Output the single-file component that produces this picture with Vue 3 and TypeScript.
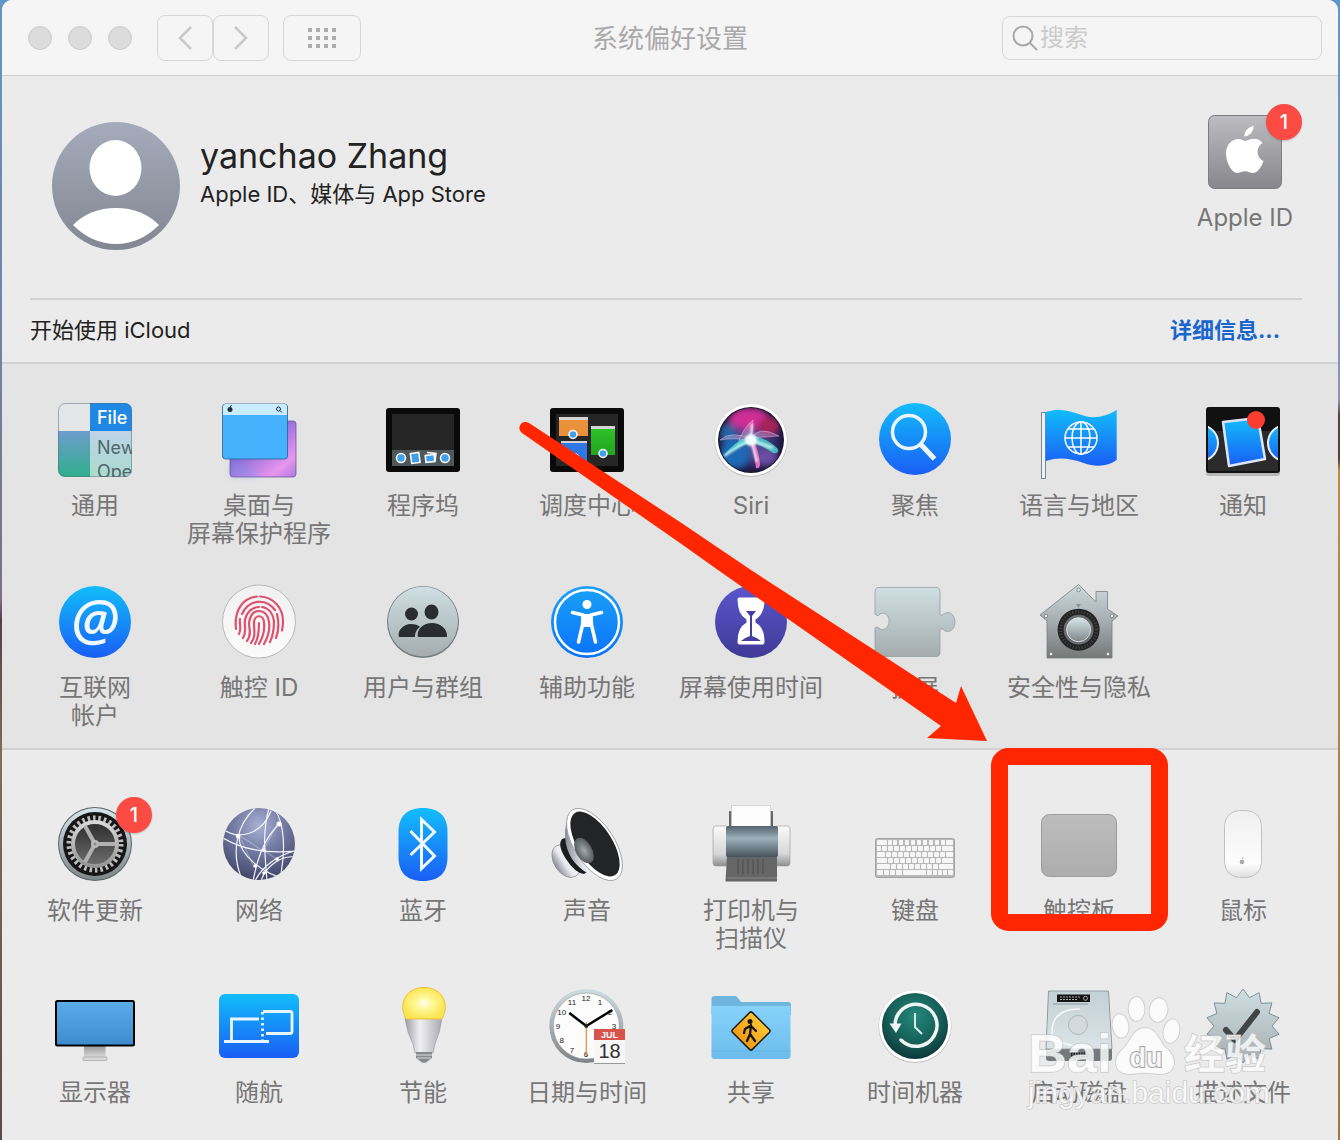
<script setup lang="ts">
interface Pane {
  id: string
  lines: string[]
  badge?: number
}

const personal: Pane[] = [
  { id: 'general', lines: ['通用'] },
  { id: 'desktop', lines: ['桌面与', '屏幕保护程序'] },
  { id: 'dock', lines: ['程序坞'] },
  { id: 'mission', lines: ['调度中心'] },
  { id: 'siri', lines: ['Siri'] },
  { id: 'spotlight', lines: ['聚焦'] },
  { id: 'language', lines: ['语言与地区'] },
  { id: 'notifications', lines: ['通知'] },
  { id: 'internet', lines: ['互联网', '帐户'] },
  { id: 'touchid', lines: ['触控 ID'] },
  { id: 'users', lines: ['用户与群组'] },
  { id: 'accessibility', lines: ['辅助功能'] },
  { id: 'screentime', lines: ['屏幕使用时间'] },
  { id: 'extensions', lines: ['扩展'] },
  { id: 'security', lines: ['安全性与隐私'] },
]

const hardware: Pane[] = [
  { id: 'update', lines: ['软件更新'], badge: 1 },
  { id: 'network', lines: ['网络'] },
  { id: 'bluetooth', lines: ['蓝牙'] },
  { id: 'sound', lines: ['声音'] },
  { id: 'printer', lines: ['打印机与', '扫描仪'] },
  { id: 'keyboard', lines: ['键盘'] },
  { id: 'trackpad', lines: ['触控板'] },
  { id: 'mouse', lines: ['鼠标'] },
  { id: 'display', lines: ['显示器'] },
  { id: 'sidecar', lines: ['随航'] },
  { id: 'energy', lines: ['节能'] },
  { id: 'datetime', lines: ['日期与时间'] },
  { id: 'sharing', lines: ['共享'] },
  { id: 'timemachine', lines: ['时间机器'] },
  { id: 'startup', lines: ['启动磁盘'] },
  { id: 'profiles', lines: ['描述文件'] },
]

const sections = [
  { name: 'personal', panes: personal },
  { name: 'hardware', panes: hardware },
]

// The calendar sheet covers 4 and 5 on the clock face.
const hours = [1, 2, 3, 6, 7, 8, 9, 10, 11, 12].map((n) => {
  const angle = (n * Math.PI) / 6
  return { n, x: 39 + 28 * Math.sin(angle), y: 42 - 28 * Math.cos(angle) }
})

const starPoints = Array.from({ length: 28 }, (_, i) => {
  const r = i % 2 === 0 ? 37 : 29
  const angle = (i * Math.PI) / 14
  return `${(40 + r * Math.sin(angle)).toFixed(1)},${(39 - r * Math.cos(angle)).toFixed(1)}`
}).join(' ')

const keyRows = [
  { y: 35, keys: [[2, 10], [13, 4], [18, 4], [24, 4], [30, 4], [36, 4], [42, 4], [48, 4], [54, 4], [60, 4], [66, 4], [71, 7]] },
  { y: 41, keys: [[2, 4], [7, 5], [13, 5], [19, 5], [25, 5], [31, 5], [37, 5], [43, 5], [49, 5], [55, 5], [61, 5], [67, 11]] },
  { y: 47, keys: [[2, 8], [11, 5], [17, 5], [23, 5], [29, 5], [35, 5], [41, 5], [47, 5], [53, 5], [59, 5], [65, 5], [71, 7]] },
  { y: 53, keys: [[2, 10], [13, 5], [19, 5], [25, 5], [31, 5], [37, 5], [43, 5], [49, 5], [55, 5], [61, 5], [67, 11]] },
  { y: 59, keys: [[2, 13], [16, 5], [22, 5], [28, 5], [34, 5], [40, 5], [46, 5], [52, 5], [58, 5], [64, 14]] },
  { y: 65, keys: [[2, 6], [9, 5], [15, 5], [21, 6], [28, 23], [52, 5], [58, 4], [63, 4], [68, 4], [73, 5]] },
]
</script>

<template>
  <div class="desktop">
    <svg class="shared-defs" width="0" height="0" aria-hidden="true">
      <defs>
        <linearGradient id="g-avatar" x2="0" y2="1"><stop stop-color="#a5abbb" /><stop offset="1" stop-color="#838791" /></linearGradient>
        <linearGradient id="g-blue" x2="0" y2="1"><stop stop-color="#12bdfb" /><stop offset="1" stop-color="#1a5ef5" /></linearGradient>
        <linearGradient id="g-access" x2="0" y2="1"><stop stop-color="#1aa2f7" /><stop offset="1" stop-color="#0a72fa" /></linearGradient>
        <linearGradient id="g-teal" x2="0" y2="1"><stop stop-color="#6d9dcc" /><stop offset="1" stop-color="#2fae8c" /></linearGradient>
        <linearGradient id="g-menu" x2="0" y2="1"><stop stop-color="#bed3e8" /><stop offset="1" stop-color="#aadbcc" /></linearGradient>
        <linearGradient id="g-purple" x2="1" y2="1"><stop stop-color="#6a55c0" /><stop offset=".4" stop-color="#8d6ad6" /><stop offset=".8" stop-color="#e796ee" /><stop offset="1" stop-color="#b077dd" /></linearGradient>
        <linearGradient id="g-appleid" x2="0" y2="1"><stop stop-color="#bdbdc1" /><stop offset="1" stop-color="#87878b" /></linearGradient>
        <linearGradient id="g-pale" x2="0" y2="1"><stop stop-color="#cfdfe3" /><stop offset="1" stop-color="#a5adae" /></linearGradient>
        <linearGradient id="g-house" x2="0" y2="1"><stop stop-color="#cddadd" /><stop offset=".5" stop-color="#a6adaf" /><stop offset="1" stop-color="#777" /></linearGradient>
        <linearGradient id="g-time" x2="0" y2="1"><stop stop-color="#5b56cd" /><stop offset="1" stop-color="#3f3a95" /></linearGradient>
        <linearGradient id="g-touch" x2="0" y2="1"><stop stop-color="#f1f1f2" /><stop offset="1" stop-color="#fbfbfb" /></linearGradient>
        <linearGradient id="g-green" x2="0" y2="1"><stop stop-color="#2fc42a" /><stop offset="1" stop-color="#23a51f" /></linearGradient>
        <radialGradient id="g-net" cx=".5" cy=".25" r=".8"><stop stop-color="#a9b1d4" /><stop offset=".5" stop-color="#6d749d" /><stop offset="1" stop-color="#3c4060" /></radialGradient>
        <linearGradient id="g-steel" x2="0" y2="1"><stop stop-color="#d7e6ea" /><stop offset="1" stop-color="#7f8586" /></linearGradient>
        <linearGradient id="g-gear" x2="0" y2="1"><stop stop-color="#d8d8d8" /><stop offset="1" stop-color="#969696" /></linearGradient>
        <linearGradient id="g-well" x2="0" y2="1"><stop stop-color="#2c2c2c" /><stop offset="1" stop-color="#6e6e6e" /></linearGradient>
        <linearGradient id="g-cone" x2="1" y2="0"><stop stop-color="#8b8b96" /><stop offset=".4" stop-color="#e8e8f0" /><stop offset="1" stop-color="#fff" /></linearGradient>
        <radialGradient id="g-dome"><stop stop-color="#a3a9ab" /><stop offset="1" stop-color="#555b5e" /></radialGradient>
        <linearGradient id="g-printer" x2="0" y2="1"><stop stop-color="#55636d" /><stop offset=".4" stop-color="#9db0bc" /><stop offset=".75" stop-color="#6b7a84" /><stop offset="1" stop-color="#46515a" /></linearGradient>
        <linearGradient id="g-case" x2="0" y2="1"><stop stop-color="#fafafa" /><stop offset=".7" stop-color="#d6d6d6" /><stop offset="1" stop-color="#8e8e8e" /></linearGradient>
        <linearGradient id="g-pad" x2="0" y2="1"><stop stop-color="#bdbdbd" /><stop offset="1" stop-color="#adadad" /></linearGradient>
        <linearGradient id="g-mouse" x2="0" y2="1"><stop stop-color="#f0f0f0" /><stop offset=".8" stop-color="#fdfdfd" /><stop offset="1" stop-color="#dedede" /></linearGradient>
        <linearGradient id="g-screen" x2="0" y2="1"><stop stop-color="#5cacea" /><stop offset="1" stop-color="#3d8bcf" /></linearGradient>
        <linearGradient id="g-stand" x2="0" y2="1"><stop stop-color="#9a9a9a" /><stop offset="1" stop-color="#dedede" /></linearGradient>
        <radialGradient id="g-bulb"><stop stop-color="#fffff0" /><stop offset=".35" stop-color="#fff9a0" /><stop offset="1" stop-color="#fae650" /></radialGradient>
        <linearGradient id="g-bulbbody"><stop stop-color="#9c9ca4" /><stop offset=".4" stop-color="#f0f0f4" /><stop offset="1" stop-color="#a9a9b2" /></linearGradient>
        <linearGradient id="g-rim" x2="0" y2="1"><stop stop-color="#cfdde1" /><stop offset="1" stop-color="#7d8385" /></linearGradient>
        <linearGradient id="g-folder" x2="0" y2="1"><stop stop-color="#86d2fb" /><stop offset="1" stop-color="#6cbdec" /></linearGradient>
        <linearGradient id="g-sign" x2="0" y2="1"><stop stop-color="#fcc535" /><stop offset="1" stop-color="#f29a13" /></linearGradient>
        <radialGradient id="g-tm" cx=".5" cy=".35" r=".7"><stop stop-color="#24897b" /><stop offset=".6" stop-color="#155c55" /><stop offset="1" stop-color="#0b2f33" /></radialGradient>
        <linearGradient id="g-disk" x2="0" y2="1"><stop stop-color="#c3d0d5" /><stop offset="1" stop-color="#dce4e7" /></linearGradient>
        <radialGradient id="g-siri" cx=".5" cy=".5" r=".5"><stop stop-color="#6d5fae" /><stop offset=".75" stop-color="#2d2a63" /><stop offset="1" stop-color="#17142f" /></radialGradient>
        <clipPath id="c-general"><rect x="3" y="3" width="74" height="74" rx="7" /></clipPath>
        <clipPath id="c-notif"><rect x="5" y="9" width="70" height="62" /></clipPath>
        <clipPath id="c-net"><circle cx="40" cy="39" r="36" /></clipPath>
        <clipPath id="c-siri"><circle cx="40" cy="40" r="32" /></clipPath>
        <filter id="f-soft" x="-30%" y="-30%" width="160%" height="160%"><feGaussianBlur stdDeviation="3" /></filter>
        <filter id="f-glow" x="-30%" y="-30%" width="160%" height="160%"><feGaussianBlur stdDeviation="1" /></filter>
      </defs>
    </svg>

    <main class="window">
      <header class="toolbar">
        <div class="controls">
          <div class="lights">
            <button aria-label="关闭"></button>
            <button aria-label="最小化"></button>
            <button aria-label="缩放"></button>
          </div>
          <div class="history">
            <button class="tool" aria-label="后退">
              <svg width="20" height="28" viewBox="0 0 20 28"><path d="M16 3 5 14l11 11" fill="none" stroke="#c9c9c9" stroke-width="2.500" /></svg>
            </button>
            <button class="tool" aria-label="前进">
              <svg width="20" height="28" viewBox="0 0 20 28"><path d="m4 3 11 11L4 25" fill="none" stroke="#c9c9c9" stroke-width="2.500" /></svg>
            </button>
          </div>
          <button class="tool wide" aria-label="显示全部">
            <svg width="28" height="20" viewBox="0 0 28 20" fill="#adadad">
              <template v-for="r in 3" :key="r">
                <rect v-for="c in 4" :key="c" :x="(c - 1) * 8" :y="(r - 1) * 8" width="4" height="4" />
              </template>
            </svg>
          </button>
        </div>
        <h1>系统偏好设置</h1>
        <label class="search">
          <svg width="26" height="26" viewBox="0 0 26 26" fill="none" stroke="#a8a8a8" stroke-width="2"><circle cx="11" cy="11" r="9.500" /><path d="m18 18 7 7" /></svg>
          <input type="search" placeholder="搜索" aria-label="搜索" />
        </label>
      </header>

      <section class="account">
        <div class="profile">
          <svg class="avatar" viewBox="0 0 128 128">
            <circle cx="64" cy="64" r="64" fill="url(#g-avatar)" />
            <ellipse cx="63.500" cy="46" rx="26" ry="28" fill="#fff" />
            <path d="M21 103Q38 86 64 86t43 17Q88 122 64 122T21 103z" fill="#fff" />
          </svg>
          <div class="who">
            <h2>yanchao Zhang</h2>
            <p>Apple ID、媒体与 App Store</p>
          </div>
          <button class="pane apple">
            <span class="art">
              <svg class="icon" viewBox="0 0 80 80">
                <rect x="3.500" y="3.500" width="73" height="73" rx="6" fill="url(#g-appleid)" stroke="#7d7d82" />
                <path d="M48.500 14c.7 5-4.300 10.500-9 10.500-.5-5 4.300-10 9-10.500zM57.500 31c-7 4-6.500 14.500 1 18-2 6-6 12-10.500 12-3 0-4.500-1.800-8-1.800-3.300 0-5.300 1.800-8 1.800-5 0-11-10-11-19.500 0-9 6-14.500 12.500-14.500 3 0 5.500 2 7 2 1.700 0 4.500-2.200 8.500-2.200 3.500 0 6.500 1.400 8.500 4.200z" fill="#fff" />
              </svg>
              <span class="badge">1</span>
            </span>
            <span class="label">Apple ID</span>
          </button>
        </div>
        <div class="icloud">
          <span>开始使用 iCloud</span>
          <a href="#icloud">详细信息...</a>
        </div>
      </section>

      <section v-for="s in sections" :key="s.name" class="panes" :class="s.name">
        <button v-for="p in s.panes" :key="p.id" class="pane">
          <span class="art">
            <svg class="icon" viewBox="0 0 80 80" aria-hidden="true">
              <g v-if="p.id === 'general'" font-family="Inter, 'Open Sans', sans-serif" font-size="18">
                <g clip-path="url(#c-general)">
                  <rect x="3" y="3" width="32" height="28" fill="#e4e6e8" />
                  <rect x="35" y="3" width="42" height="28" fill="#1f88e5" />
                  <rect x="3" y="31" width="32" height="46" fill="url(#g-teal)" />
                  <rect x="35" y="31" width="42" height="46" fill="url(#g-menu)" />
                  <text x="42" y="24" fill="#fff" font-weight="500">File</text>
                  <text x="42" y="54" fill="#50666d">New</text>
                  <text x="42" y="78" fill="#50666d">Ope</text>
                </g>
                <rect x="3.500" y="3.500" width="73" height="73" rx="7" fill="none" stroke="#55707a" stroke-opacity=".5" />
              </g>

              <g v-else-if="p.id === 'desktop'">
                <rect x="11" y="21" width="66" height="56" rx="3" fill="url(#g-purple)" stroke="#5a4a9c" stroke-width=".7" />
                <path d="M12 60q16 3 30 17H12z" fill="#7c9ae8" opacity=".4" filter="url(#f-soft)" />
                <rect x="3.500" y="4" width="65" height="55" rx="3" fill="#46b1fd" stroke="#2c5f92" stroke-width=".8" />
                <path d="M4 15V7q0-3 3-3h58q3 0 3 3v8z" fill="#c9ecff" />
                <circle cx="11" cy="9.500" r="2.500" fill="#1d2d3c" /><path d="m11 7 1.500-2" stroke="#1d2d3c" />
                <circle cx="59.500" cy="9" r="2" fill="none" stroke="#1d2d3c" /><path d="m61 10.500 2 2" stroke="#1d2d3c" />
              </g>

              <g v-else-if="p.id === 'dock'">
                <rect x="3" y="8" width="74" height="64" rx="3" fill="#0a0a0a" />
                <rect x="9" y="14" width="62" height="36" fill="#262626" />
                <rect x="9" y="50" width="62" height="16" fill="#50575b" />
                <g fill="#3fa0ee" stroke="#fff" stroke-width="1.500">
                  <circle cx="18" cy="58" r="4.500" />
                  <rect x="28" y="53" width="8.500" height="10" transform="rotate(-8 32 58)" />
                  <path d="m44 52.500 9 1-1 8" fill="none" />
                  <rect x="42.500" y="55" width="9" height="7" transform="rotate(-6 47 58)" />
                  <circle cx="62" cy="58" r="4.500" />
                </g>
              </g>

              <g v-else-if="p.id === 'mission'">
                <rect x="3" y="8" width="74" height="64" rx="3" fill="#0a0a0a" />
                <rect x="9" y="14" width="62" height="52" fill="#262626" />
                <rect x="12" y="17" width="29" height="19" fill="#e8913a" /><rect x="12" y="17" width="29" height="3" fill="#d3d3d3" />
                <rect x="44" y="26" width="24" height="29" fill="url(#g-green)" /><rect x="44" y="26" width="24" height="3" fill="#d3d3d3" />
                <rect x="14" y="41" width="26" height="20" fill="#2f77e4" /><rect x="14" y="41" width="26" height="2" fill="#d3d3d3" />
                <g fill="#3fa0ee" stroke="#fff" stroke-width="1.500"><circle cx="26" cy="34.500" r="4" /><circle cx="56" cy="53.500" r="4" /><circle cx="28" cy="58" r="4" /></g>
              </g>

              <g v-else-if="p.id === 'siri'">
                <circle cx="40" cy="40.500" r="36.500" fill="#bbb" /><circle cx="40" cy="40" r="36" fill="#fff" />
                <circle cx="40" cy="40" r="33" fill="url(#g-siri)" />
                <g clip-path="url(#c-siri)">
                  <g filter="url(#f-soft)">
                    <ellipse cx="38" cy="19" rx="20" ry="11" fill="#cf2f95" /><ellipse cx="58" cy="26" rx="11" ry="9" fill="#a82458" />
                    <ellipse cx="24" cy="54" rx="15" ry="15" fill="#1b69b5" /><ellipse cx="17" cy="33" rx="8" ry="9" fill="#2366a7" />
                    <ellipse cx="55" cy="57" rx="12" ry="9" fill="#694ea2" />
                  </g>
                  <path d="M40 39Q20 30 9 40q16-3 31 1zM40 38q8-13 28-2-16 1-28 2zM42 20Q32 27 26 46q7-7 15-12z" fill="#ffc8ef" fill-opacity=".3" stroke="#f8c9f5" stroke-opacity=".6" stroke-width=".7" />
                  <path d="M13 56Q22 42 39 36q16 1 28 13 1 5-5 4-11-8-21-10-12 2-28 13z" fill="#4ce4d6" fill-opacity=".75" />
                  <path d="M38 37q5 12 7 31 4 1 4-4-1-12-7-26z" fill="#ee70c8" fill-opacity=".95" />
                  <g filter="url(#f-glow)"><path d="M13 56 38 40M41 24l-1 16 6 22M40 40l22 8" stroke="#effff9" stroke-width="2.500" fill="none" stroke-opacity=".8" /><circle cx="40" cy="40" r="6" fill="#f4fdff" /></g>
                </g>
              </g>

              <g v-else-if="p.id === 'spotlight'">
                <circle cx="40" cy="39" r="36" fill="url(#g-blue)" />
                <g fill="none" stroke="#edf5fc"><circle cx="34" cy="32" r="16.500" stroke-width="3.500" /><path d="m45.500 44 14 15" stroke-width="5" /></g>
              </g>

              <g v-else-if="p.id === 'language'">
                <rect x="2.500" y="12.500" width="4" height="66" fill="#eef2f5" stroke="#7b8894" />
                <path d="M6.700 12C22 7 34 12 46 16c10 3 22 0 31.700-6v50c-9 7-22 7-33 3-14-5-25-6-38-2z" fill="url(#g-blue)" />
                <g fill="none" stroke="#fff" stroke-width="1.500"><circle cx="42" cy="38" r="16" /><ellipse cx="42" cy="38" rx="9" ry="16" /><path d="M42 22v32M26 38h32M29 29h26M29 47h26" /></g>
              </g>

              <g v-else-if="p.id === 'notifications'">
                <rect x="3" y="9" width="74" height="67" rx="3" fill="#000" opacity=".2" />
                <rect x="3" y="7" width="74" height="66" rx="3" fill="#111" />
                <rect x="5" y="31" width="70" height="40" fill="#2b2b2b" />
                <g clip-path="url(#c-notif)" fill="url(#g-blue)" stroke="#e8eefb" stroke-width="2"><circle cx="-3" cy="43" r="18" /><circle cx="83" cy="43" r="18" /></g>
                <path d="m20 22 35-4 7 41-36 7z" fill="url(#g-blue)" stroke="#dfe5f8" stroke-width="2.500" stroke-linejoin="round" />
                <circle cx="53" cy="20" r="9" fill="#fb3d30" />
              </g>

              <g v-else-if="p.id === 'internet'">
                <circle cx="40" cy="40" r="36" fill="url(#g-blue)" />
                <text x="40" y="58" text-anchor="middle" fill="#f2f8ff" font-family="'Noto Sans', sans-serif" font-style="italic" font-weight="500" font-size="56">@</text>
              </g>

              <g v-else-if="p.id === 'touchid'">
                <circle cx="40" cy="39.500" r="36.500" fill="url(#g-touch)" stroke="#b8b8b8" />
                <g fill="none" stroke="#e0506f" stroke-width="2.200" stroke-linecap="round">
                  <path d="M17 47c-2-18 6-31 21-32.500M41 14.500c14 .5 23 12 23 25q0 5-1 9" />
                  <path d="M20 52c3-6 0-9 1-15M23 32c7-15 24-16 33-4M58 32c2 8 2 16-1 24" />
                  <path d="M24 56c4-6 1-12 2-18 2-9 8-13 14-13M43 25c7 1 11 7 12 14 0 9-1 15-4 21" />
                  <path d="M28 59c5-6 2-12 2-18 1-8 5-12 10-12s9 4 10 11-1 15-5 22" />
                  <path d="M32 61c5-6 3-13 3-20 0-9 10-9 10 0 1 8-1 14-5 21" />
                  <path d="M36 62c4-7 4-15 4-21" />
                </g>
              </g>

              <g v-else-if="p.id === 'users'">
                <circle cx="40" cy="40" r="36" fill="#71797b" /><circle cx="40" cy="39.500" r="35" fill="url(#g-pale)" />
                <g fill="#2a2d2f"><circle cx="28.500" cy="32" r="6.500" /><ellipse cx="48.500" cy="30" rx="7" ry="7.500" /><path d="M16 55c-2-7 5-13 12-13 4 0 7 1 9 3-3 2-5 5-5 10zM35 55c-2-8 6-14 14-14s16 6 15 14z" /></g>
              </g>

              <g v-else-if="p.id === 'accessibility'">
                <circle cx="40" cy="40" r="36" fill="url(#g-access)" /><circle cx="40" cy="40" r="32" fill="none" stroke="#fff" stroke-width="2.500" />
                <circle cx="40" cy="22.500" r="4.500" fill="#fff" />
                <path d="M25.500 30.500 36 33l-.5 10-4 17M54.500 30.500 44 33l.5 10 4 17" fill="none" stroke="#fff" stroke-width="3.500" stroke-linecap="round" stroke-linejoin="round" /><path d="M36 32h8v13h-8z" fill="#fff" />
              </g>

              <g v-else-if="p.id === 'screentime'">
                <circle cx="40" cy="40" r="36" fill="url(#g-time)" />
                <path d="M28.500 15.500h23q2 0 2 2 0 15-9 20v3q9 5 9 19 0 3-2 3h-23q-2 0-2-3 0-14 9-19v-3q-9-5-9-20 0-2 2-2z" fill="#fff" />
                <path d="M35 29h10l-4 5v20q6 2 9 5H30q3-3 9-5V34z" fill="#453e9f" />
              </g>

              <g v-else-if="p.id === 'extensions'">
                <path d="M0 10q0-4.500 4-4.500h57q4 0 4 4.500v23q2 1 4-1c4-4 11 0 11 8s-7 12-11 8q-2-2-4-1v23q0 4.500-4 4.500H4q-4 0-4-4.500V46q2-2 4 0c4 4 10 0 10-7s-6-10-10-6q-2 2-4-1z" fill="url(#g-pale)" stroke="#8e999b" stroke-width=".7" />
              </g>

              <g v-else-if="p.id === 'security'">
                <path d="M39.600 2.500 57 20V9.500h11.500V27L79 34l-6 5v37H8V39l-7-6z" fill="url(#g-house)" stroke="#777d80" stroke-width=".8" />
                <path d="m37 22 2.500 4 2.500-4z" fill="#8a9294" />
                <circle cx="39.600" cy="47.700" r="21" fill="#222" /><circle cx="39.600" cy="47.700" r="18" fill="none" stroke="#484848" stroke-width="3" stroke-dasharray="1 2" /><circle cx="39.600" cy="47.700" r="15" fill="#666c6e" /><circle cx="39.600" cy="47.700" r="12" fill="url(#g-steel)" stroke="#ddd" />
                <g fill="#eee" stroke="#777" stroke-width=".8"><circle cx="39.600" cy="8" r="1.800" /><circle cx="7" cy="34" r="1.800" /><circle cx="73" cy="34" r="1.800" /><circle cx="12" cy="72" r="1.800" /><circle cx="69" cy="72" r="1.800" /></g>
              </g>

              <g v-else-if="p.id === 'update'">
                <circle cx="40" cy="39" r="37" fill="#5a6264" /><circle cx="40" cy="39" r="36" fill="url(#g-steel)" /><circle cx="40" cy="39" r="32" fill="#161616" />
                <circle cx="40" cy="39" r="22" fill="url(#g-well)" />
                <circle cx="40" cy="39" r="26" fill="none" stroke="#bdbdbd" stroke-width="5" stroke-dasharray="2.600 2.840" />
                <circle cx="40" cy="39" r="22" fill="none" stroke="url(#g-gear)" stroke-width="4" />
                <path d="M40 39h20M40 39 30 21M40 39 30 57" stroke="#b0b0b0" stroke-width="4" /><circle cx="40" cy="39" r="4" fill="#bababa" /><circle cx="40" cy="39" r="1.500" fill="#888" />
              </g>

              <g v-else-if="p.id === 'network'">
                <circle cx="40" cy="39" r="36" fill="url(#g-net)" />
                <g clip-path="url(#c-net)" fill="none" stroke="#f4f6ff" stroke-width="1.200">
                  <path d="M4 24c14 11 38 7 48-18M4 33c20 12 44 16 74 13M36 3C18 20 12 46 22 72M20 32c0 18 24 37 48 42M50 3C43 28 46 50 48 76M56 5c10 14 10 42 6 64M61 18C44 34 38 56 34 76M76 46C60 50 44 60 36 76M76 52C62 50 46 62 42 76" />
                  <path d="M20 30 44 46l16-30M20 30l14 30M46 46l14 10" stroke-opacity=".3" />
                </g>
                <g fill="#fff"><circle cx="19" cy="31" r="2.300" /><circle cx="60" cy="19" r="2.500" /><circle cx="45" cy="45" r="1.800" /><circle cx="58" cy="54" r="1.800" /><circle cx="36" cy="61" r="1.800" /><circle cx="45" cy="68" r="1.800" /></g>
              </g>

              <g v-else-if="p.id === 'bluetooth'">
                <path d="M40 3c17 0 24.500 9 24.500 24v25c0 15-7.500 24-24.500 24S15.500 67 15.500 52V27C15.500 12 23 3 40 3z" fill="url(#g-blue)" />
                <path d="m27.500 26 24 25-13 12.500v-49l13 12.500-24 23" fill="none" stroke="#f2f8ff" stroke-width="3" />
              </g>

              <g v-else-if="p.id === 'sound'">
                <ellipse cx="19" cy="56" rx="12" ry="18" transform="rotate(-33 19 56)" fill="url(#g-cone)" stroke="#888" stroke-width=".7" />
                <path d="M15 34q-5 6 4 20t18 15l6-4L22 32z" fill="#1c1c20" />
                <path d="M18 26Q20 8 29 3l35 70q-10 4-27-7-20-14-19-40z" fill="url(#g-cone)" />
                <ellipse cx="47.500" cy="39.500" rx="41" ry="20" transform="rotate(57 47.500 39.500)" fill="#fff" stroke="#999" stroke-width=".8" />
                <ellipse cx="48" cy="39" rx="37" ry="17" transform="rotate(57 48 39)" fill="#222426" />
                <ellipse cx="37" cy="45.500" rx="14" ry="8" transform="rotate(60 37 45.500)" fill="url(#g-dome)" />
              </g>

              <g v-else-if="p.id === 'printer'">
                <rect x="18" y="6" width="44" height="20" rx="1" fill="#656565" /><rect x="20.500" y=".5" width="39" height="24" fill="#fcfcfc" stroke="#ccc" stroke-width=".7" />
                <rect x="2" y="21" width="16" height="40" rx="3" fill="url(#g-case)" stroke="#999" stroke-width=".6" /><rect x="63" y="21" width="16" height="40" rx="3" fill="url(#g-case)" stroke="#999" stroke-width=".6" />
                <path d="M16 51h50v25.500H14.500z" fill="#666" /><path d="M27 54v15m5-15v15m5-15v15m5-15v15m5-15v15m5-15v15" stroke="#4a4a4a" />
                <path d="M16 73h50" stroke="#888" /><rect x="15" y="21" width="52" height="31" rx="2" fill="url(#g-printer)" />
              </g>

              <g v-else-if="p.id === 'keyboard'">
                <rect x=".5" y="33.500" width="79" height="39" rx="2" fill="#b9b9b9" stroke="#a3a3a3" />
                <template v-for="row in keyRows" :key="row.y">
                  <rect v-for="k in row.keys" :key="k[0]" :x="k[0]" :y="row.y" :width="k[1]" height="5" fill="#f6f6f6" rx=".8" />
                </template>
              </g>

              <rect v-else-if="p.id === 'trackpad'" x="2.500" y="9.500" width="75" height="62" rx="8" fill="url(#g-pad)" stroke="#9c9c9c" />

              <g v-else-if="p.id === 'mouse'">
                <rect x="21.500" y="5.500" width="37" height="67" rx="15" fill="url(#g-mouse)" stroke="#c2c2c2" />
                <circle cx="39" cy="57" r="2.300" fill="#aaa" /><path d="m39 54 1.500-2" stroke="#aaa" />
              </g>

              <g v-else-if="p.id === 'display'">
                <path d="M29 59h21.500v12H29z" fill="url(#g-stand)" /><rect x="28" y="70" width="24" height="3.500" rx="1" fill="#d8d8d8" stroke="#999" stroke-width=".6" />
                <rect x="1" y="14" width="78" height="44.500" rx="1.500" fill="url(#g-screen)" stroke="#000" stroke-width="2" />
              </g>

              <g v-else-if="p.id === 'sidecar'">
                <rect y="7" width="80" height="64" rx="6" fill="url(#g-blue)" />
                <g fill="none" stroke="#eaf6ff" stroke-width="2.800"><path d="M12.500 53V32H40M5 54.500h45M44 24.500h27q2 0 2 2v18q0 2-2 2H47" /><path d="M43.500 25v30" stroke-dasharray="2.500 3" /></g>
              </g>

              <g v-else-if="p.id === 'energy'">
                <path d="M22 31h37q-2 15-7 26l-2 9H32l-2-9q-6-11-8-26z" fill="url(#g-bulbbody)" stroke="#999" stroke-width=".6" />
                <path d="M23 32C14 14 25 .5 41 .5S68 14 59 32z" fill="url(#g-bulb)" stroke="#f0bd3a" />
                <path d="M33 65h16v6l-4 3q-4 4-8 0l-4-3z" fill="#87898a" /><path d="M33 68h16M34 71h14" stroke="#ddd" />
              </g>

              <g v-else-if="p.id === 'datetime'">
                <circle cx="39.300" cy="39" r="37" fill="url(#g-rim)" /><circle cx="39.300" cy="39" r="33" fill="#fcfcfc" stroke="#999" stroke-width=".6" />
                <text v-for="h in hours" :key="h.n" :x="h.x" :y="h.y" text-anchor="middle" font-size="8" font-family="'Liberation Sans', sans-serif" fill="#222">{{ h.n }}</text>
                <path d="m39.300 39-17-13" stroke="#000" stroke-width="2.500" /><path d="m39.300 39 26-16" stroke="#000" stroke-width="2.500" /><path d="M39.300 35v34" stroke="#e48a2b" stroke-width="1.200" /><circle cx="39.300" cy="39" r="2" fill="#222" />
                <rect x="47" y="42" width="31" height="35" fill="#999" /><rect x="47" y="42" width="31" height="34" fill="#f7f7f7" /><rect x="47" y="42" width="31" height="11" fill="#d9534d" />
                <text x="62.500" y="51" text-anchor="middle" font-size="9" font-weight="700" font-family="'Liberation Sans', sans-serif" fill="#fff">JUL</text>
                <text x="62.500" y="71" text-anchor="middle" font-size="20" font-family="'Liberation Sans', sans-serif" fill="#333">18</text>
              </g>

              <g v-else-if="p.id === 'sharing'">
                <path d="M.5 12q0-3 3-3H24q2 0 3 2l3 4h47q3 0 3 3v10H.500z" fill="#6fb6df" />
                <path d="M.5 19h79v50q0 3-3 3h-73q-3 0-3-3z" fill="url(#g-folder)" /><path d="M.5 64h79" stroke="#62aedb" stroke-width=".7" />
                <rect x="26" y="30" width="28" height="28" rx="2" transform="rotate(45 40 44)" fill="url(#g-sign)" stroke="#1b1b1b" stroke-width="1.500" />
                <g fill="none" stroke="#151515" stroke-width="2.300" stroke-linecap="round"><path d="m40 38-1 9 5 7M39 47l-3 7M40 39l5 5M39 39l-5 3-1 4" /></g><circle cx="39" cy="34.500" r="2.500" fill="#151515" />
              </g>

              <g v-else-if="p.id === 'timemachine'">
                <circle cx="40" cy="39.500" r="36.500" fill="#c0c0c0" /><circle cx="40" cy="39" r="36" fill="#fff" /><circle cx="40" cy="39" r="33" fill="url(#g-tm)" />
                <path d="M20 38a21 21 0 1 1 6 15" fill="none" stroke="#edf4f3" stroke-width="3.500" stroke-linecap="round" /><path d="M14.500 36.500h12L21 46z" fill="#edf4f3" />
                <path d="M40 26v14l7 7" fill="none" stroke="#d8eae7" stroke-width="2" />
              </g>

              <g v-else-if="p.id === 'startup'">
                <path d="M9.500 4h60L73 62v9q0 3-3 3H10q-3 0-3-3v-9z" fill="#75797b" /><path d="M9.500 4h60L73 62H7z" fill="url(#g-disk)" stroke="#8b9396" stroke-width=".8" />
                <rect x="18" y="7.500" width="33" height="7.500" fill="#141414" /><path d="M21 10h20m-20 2.500h18" stroke="#aaa" stroke-dasharray="2 1" /><circle cx="46.500" cy="11.300" r="2" fill="none" stroke="#ccc" stroke-width=".8" />
                <path d="M14 17h35" stroke="#8e989c" /><path d="M13 45q0-23 28-23M13 45l1 8 24 7" fill="none" stroke="#f7f9fa" stroke-width="1.500" /><circle cx="39" cy="38" r="9.500" fill="#d3dade" stroke="#a6afb4" stroke-width=".8" />
                <path d="M32 68h17" stroke="#222" stroke-width="5" stroke-dasharray="1.500 1" />
              </g>

              <g v-else-if="p.id === 'profiles'">
                <polygon :points="starPoints" fill="url(#g-pale)" stroke="#6a7b87" stroke-width=".8" />
                <path d="m23 43 9 10 22-28" fill="none" stroke="#424346" stroke-width="6" stroke-linecap="round" stroke-linejoin="round" />
              </g>
            </svg>
            <span v-if="p.badge" class="badge">{{ p.badge }}</span>
          </span>
          <span v-for="line in p.lines" :key="line" class="label">{{ line }}</span>
        </button>
      </section>
    </main>

    <svg class="overlay" viewBox="0 0 1340 1140" aria-hidden="true">
      <path d="M529 423 680 522l71 48 205 133 5-17 26 55-60-3 14-12-223-156-38-27-158-110a5.500 5.500 0 0 1 7-10z" fill="#ff2600" />
      <rect x="999.500" y="756.500" width="160" height="166" rx="9" fill="none" stroke="#ff2600" stroke-width="17" />
      <g fill="#fff" fill-opacity=".8" stroke="#bdbdbd" stroke-opacity=".7" stroke-width="1.500" paint-order="stroke">
        <text x="1028" y="1072" font-family="'Liberation Sans', sans-serif" font-weight="700" font-size="54">Bai</text>
        <ellipse cx="1120.500" cy="1026" rx="8" ry="12" transform="rotate(-8 1120 1026)" />
        <ellipse cx="1136.500" cy="1009" rx="8" ry="12" />
        <ellipse cx="1158.500" cy="1010" rx="9" ry="12" transform="rotate(8 1158 1010)" />
        <ellipse cx="1171.500" cy="1031" rx="8" ry="12" transform="rotate(12 1171 1031)" />
        <path d="M1145 1028c12 0 14 13 21 20 12 9 11 26-5 26-6 0-10-1-16-1s-10 1-16 1c-16 0-17-17-5-26 7-7 9-20 21-20z" />
        <text x="1184" y="1069" font-family="'Noto Sans CJK SC', sans-serif" font-weight="700" font-size="41">经验</text>
        <text x="1028" y="1103" font-family="'Liberation Sans', sans-serif" font-size="30">jingyan.baidu.com</text>
        <text x="1146" y="1067" text-anchor="middle" font-family="'Liberation Sans', sans-serif" font-weight="700" font-size="27" stroke="#a9a9a9" stroke-opacity="1" stroke-width="2">du</text>
      </g>
    </svg>
  </div>
</template>

<style>
body {
  margin: 0;
}
</style>

<style scoped>
* {
  box-sizing: border-box;
}

.desktop {
  position: relative;
  min-height: 100vh;
  padding: 0 2px;
  background:
    linear-gradient(#5f97c4, #7481a8 350px, #7a6f86 600px, #54404a 620px, #8a6a58 760px, #5a4b4c) left / 50% 100% no-repeat,
    linear-gradient(#5f97c4, #8b93b5 400px, #5b4236 415px, #5b4236 460px, #b98a4c 470px, #a3763f) right / 50% 100% no-repeat;
  color: #222;
  font-family: Inter, 'Noto Sans CJK SC', sans-serif;
}

.shared-defs {
  position: absolute;
}

button {
  padding: 0;
  border: 0;
  background: none;
  color: inherit;
  font: inherit;
}

h1,
h2,
p {
  margin: 0;
  font-weight: 400;
}

.window {
  min-height: 100vh;
  overflow: hidden;
  border-radius: 10px 10px 0 0;
  background: #ebebeb;
}

.toolbar {
  display: grid;
  grid-template-columns: 1fr auto 1fr;
  align-items: center;
  height: 76px;
  padding: 0 16px;
  border-bottom: 1px solid #cfcfcf;
  background: #f5f5f5;
}

.controls,
.lights,
.history {
  display: flex;
  align-items: center;
}

.lights {
  gap: 16px;
  margin: 0 25px 0 10px;
}

.lights button {
  width: 24px;
  height: 24px;
  border: 1px solid #cdcdcd;
  border-radius: 50%;
  background: #dcdcdc;
}

.history {
  margin-right: 14px;
}

.tool {
  display: flex;
  align-items: center;
  justify-content: center;
  width: 56px;
  height: 46px;
  border: 1px solid #d8d8d8;
  border-radius: 8px;
}

.tool.wide {
  width: 78px;
}

h1 {
  padding-top: 3px;
  color: #a9a9a9;
  font-size: 26px;
  line-height: 36px;
}

.search {
  display: flex;
  align-items: center;
  justify-self: end;
  width: 320px;
  height: 44px;
  padding: 0 9px;
  border: 1px solid #d8d8d8;
  border-radius: 8px;
}

.search svg {
  flex: none;
}

.search input {
  flex: 1;
  min-width: 0;
  padding: 0 0 0 2px;
  border: 0;
  outline: 0;
  background: none;
  font: inherit;
  font-size: 24px;
  line-height: 32px;
}

.search input::placeholder {
  color: #cbcbcb;
}

.account {
  padding: 0 36px 0 28px;
  border-bottom: 2px solid #d2d2d2;
}

.profile {
  display: flex;
  align-items: flex-start;
  height: 224px;
  padding-top: 36px;
  border-bottom: 2px solid #d2d2d2;
}

.avatar {
  width: 128px;
  height: 128px;
  margin: 10px 20px 0 22px;
}

.who {
  flex: 1;
  margin-top: 22px;
}

h2 {
  font-size: 34px;
  line-height: 44px;
}

.who p {
  font-size: 22px;
  line-height: 32px;
}

.apple {
  width: 114px;
}

.icloud {
  display: flex;
  align-items: center;
  justify-content: space-between;
  height: 62px;
  padding: 0 22px 2px 0;
  font-size: 22px;
  line-height: 32px;
}

.icloud a {
  color: #1a66cc;
  font-weight: 700;
  text-decoration: none;
}

.panes {
  display: grid;
  grid-template-columns: repeat(8, 1fr);
  row-gap: 34px;
}

.personal {
  padding: 36px 13px 18px 11px;
  border-bottom: 2px solid #d2d2d2;
  background: #e4e4e4;
}

.hardware {
  padding: 55px 13px 5px 11px;
}

.pane {
  display: flex;
  flex-direction: column;
  align-items: center;
  min-height: 148px;
  color: #767676;
}

.art {
  position: relative;
  margin-bottom: 12px;
}

.icon {
  display: block;
  width: 80px;
  height: 80px;
  overflow: visible;
}

.badge {
  position: absolute;
  top: -8px;
  left: 61px;
  width: 36px;
  height: 36px;
  border-radius: 50%;
  background: #fc4b42;
  box-shadow: 0 1px 2px #0003;
  color: #fff;
  font-size: 20px;
  font-weight: 500;
  line-height: 36px;
  text-align: center;
}

.label {
  font-size: 24px;
  line-height: 28px;
  white-space: nowrap;
}

.overlay {
  position: absolute;
  top: 0;
  left: 0;
  width: 100%;
  pointer-events: none;
}
</style>
